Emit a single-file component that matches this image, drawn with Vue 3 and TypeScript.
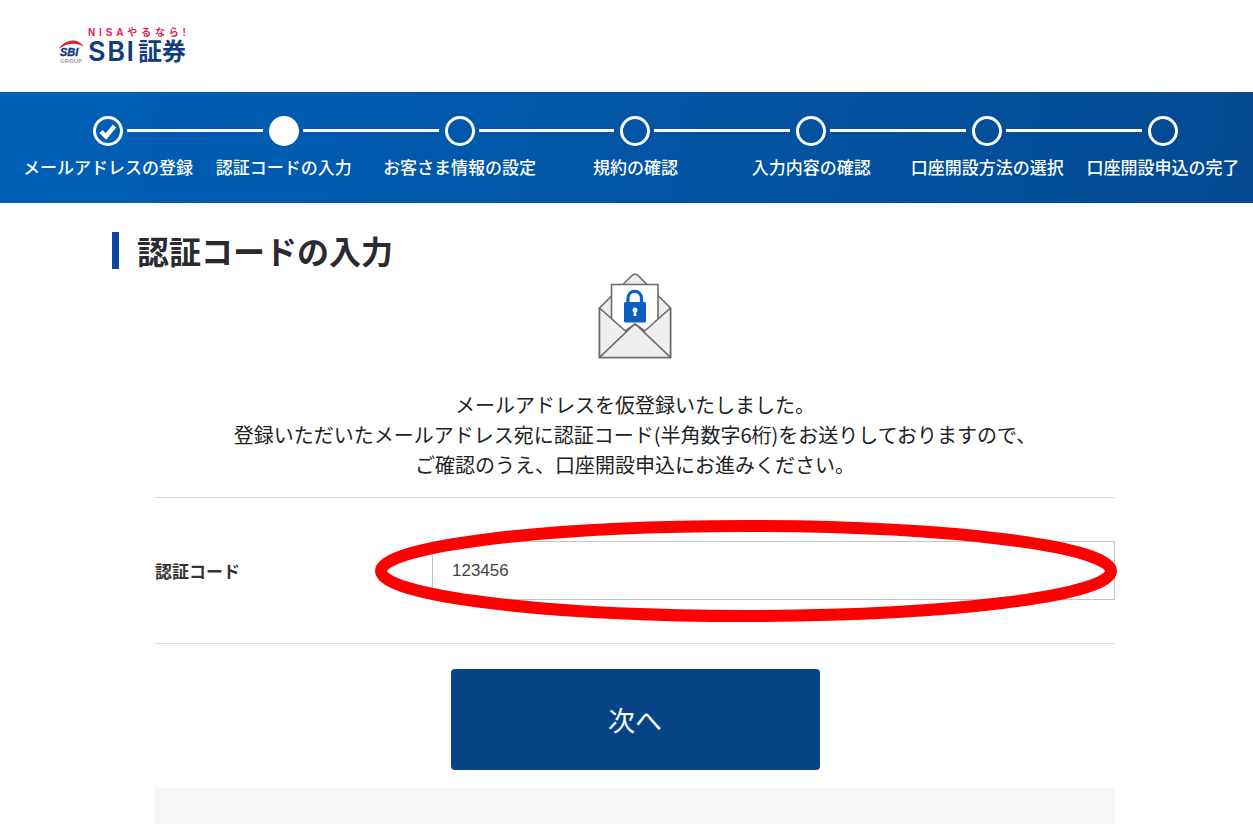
<script setup lang="ts">
import { ref } from 'vue'

type StepState = 'done' | 'current' | 'todo'

interface Step {
  label: string
  state: StepState
}

const steps: Step[] = [
  { label: 'メールアドレスの登録', state: 'done' },
  { label: '認証コードの入力', state: 'current' },
  { label: 'お客さま情報の設定', state: 'todo' },
  { label: '規約の確認', state: 'todo' },
  { label: '入力内容の確認', state: 'todo' },
  { label: '口座開設方法の選択', state: 'todo' },
  { label: '口座開設申込の完了', state: 'todo' },
]

const tagline: string[] = [...'NISAやるなら!']
const brandLetters: string[] = [...'SBI']
const code = ref<string>('123456')
</script>

<template>
  <div class="page">
    <header class="header">
      <a class="logo" href="#">
        <svg class="emblem" viewBox="0 0 26 26" width="26" height="26" aria-hidden="true">
          <path d="M1 10 C5 1.500 19 -3 26 8 C18 3 9 4 1 10Z" fill="#d9262f" />
          <text x="2" y="17" class="emblem-name">SBI</text>
          <text x="2" y="24" class="emblem-group">GROUP</text>
        </svg>
        <span class="wordmark">
          <span class="tagline"><span v-for="(c, i) in tagline" :key="i">{{ c }}</span></span>
          <span class="brand">
            <span class="brand-latin"><span v-for="c in brandLetters" :key="c">{{ c }}</span></span>
            <span class="brand-kanji">証券</span>
          </span>
        </span>
      </a>
    </header>

    <nav class="progress">
      <ol class="steps">
        <li v-for="step in steps" :key="step.label" class="step">
          <span class="marker-row">
            <span class="marker" :class="step.state">
              <svg v-if="step.state === 'done'" viewBox="0 0 30 30" width="30" height="30" aria-hidden="true">
                <path d="M8 15.500 L13 20.500 L21.500 10" fill="none" stroke="#fff" stroke-width="4.400" />
              </svg>
            </span>
            <span class="connector"></span>
          </span>
          <span class="step-label">{{ step.label }}</span>
        </li>
      </ol>
    </nav>

    <main class="main">
      <h1 class="title">認証コードの入力</h1>

      <div class="content">
        <svg class="envelope" viewBox="0 0 74 88" width="74" height="88" aria-hidden="true">
          <g stroke="#6b6b6b" stroke-width="1.600" stroke-linejoin="round">
            <path d="M1.500 36 L34 3.500 Q37 1 40 3.500 L72.500 36 V85.500 H1.500Z" fill="#ededed" />
            <path d="M13.500 12.500 H60 V49 L48 60 L37 52 L26 60 L13.500 49Z" fill="#fff" />
            <path d="M1.500 36 L28.500 60 L1.500 85.500Z M72.500 36 L45.500 60 L72.500 85.500Z" fill="#efefef" />
            <path d="M1.500 85.500 L34 54.500 Q37 51.500 40 54.500 L72.500 85.500Z" fill="#efefef" />
          </g>
          <path d="M30 31 V26.500 C30 17 43.500 17 43.500 26.500 V31" fill="none" stroke="#0a5fc0" stroke-width="3.200" />
          <rect x="26" y="30" width="22" height="20.500" rx="1.500" fill="#0a5fc0" />
          <circle cx="37" cy="38" r="2.500" fill="#fff" />
          <path d="M36 38 H38 L38.500 44 H35.500Z" fill="#fff" />
        </svg>

        <p class="message">
          メールアドレスを仮登録いたしました。<br />
          登録いただいたメールアドレス宛に認証コード(半角数字6桁)をお送りしておりますので、<br />
          ご確認のうえ、口座開設申込にお進みください。
        </p>

        <form class="form" @submit.prevent>
          <div class="field">
            <label class="field-label" for="auth-code">認証コード</label>
            <div class="field-control">
              <input id="auth-code" v-model="code" class="code-input" type="text" inputmode="numeric" />
              <svg class="highlight" aria-hidden="true">
                <ellipse class="highlight-ring" cx="50%" cy="50%" />
              </svg>
            </div>
          </div>
          <button class="next" type="submit">次へ</button>
        </form>

        <section class="panel"></section>
      </div>
    </main>
  </div>
</template>

<style>
body {
  margin: 0;
  background: #fff;
}
</style>

<style scoped>
.page {
  display: flex;
  flex-direction: column;
  height: 100vh;
  overflow: hidden;
  color: #222;
  font-family: "Noto Sans CJK JP", sans-serif;
}

.header {
  flex: none;
  box-sizing: border-box;
  height: 92px;
  padding: 27px 0 0 58px;
}

.logo {
  display: inline-flex;
  align-items: flex-end;
  gap: 4px;
  color: #123c80;
  text-decoration: none;
}

.emblem {
  display: block;
}

.emblem-name {
  font: italic bold 11px "Liberation Sans", sans-serif;
  fill: #123c80;
  stroke: #123c80;
  stroke-width: 0.4px;
}

.emblem-group {
  font: 6px "Liberation Sans", sans-serif;
  fill: #777;
}

.wordmark {
  display: flex;
  flex-direction: column;
  width: 98px;
}

.tagline {
  display: flex;
  justify-content: space-between;
  color: #d8284c;
  font-family: "Liberation Sans", "Noto Sans CJK JP", sans-serif;
  font-size: 10px;
  font-weight: 700;
  line-height: 11px;
}

.brand {
  display: flex;
  align-items: center;
  justify-content: space-between;
  height: 27px;
}

.brand-latin {
  display: flex;
  justify-content: space-between;
  width: 46px;
  font: 600 27px/27px Inter, sans-serif;
}

.brand-kanji {
  font-family: "Liberation Sans", "Noto Sans CJK JP", sans-serif;
  font-size: 24px;
  font-weight: 700;
  line-height: 27px;
}

.progress {
  flex: none;
  box-sizing: border-box;
  height: 111px;
  padding: 24px 2px 0 20px;
  background: linear-gradient(100deg, #0060b8, #034a92);
  color: #fff;
}

.steps {
  display: grid;
  grid-template-columns: repeat(7, 1fr);
  margin: 0;
  padding: 0;
  list-style: none;
}

.step {
  display: flex;
  flex-direction: column;
  align-items: center;
  gap: 8px;
}

.marker-row {
  display: flex;
  align-items: center;
  align-self: stretch;
  gap: 4px;
  margin-left: calc(50% - 15px);
  margin-right: calc(21px - 50%);
}

.step:last-child .connector {
  visibility: hidden;
}

.marker {
  flex: none;
  box-sizing: border-box;
  width: 30px;
  height: 30px;
  border: 3px solid #fff;
  border-radius: 50%;
}

.marker svg {
  display: block;
  margin: -3px;
}

.marker.current {
  background: #fff;
}

.connector {
  flex: 1;
  height: 3px;
  margin-bottom: 2px;
  background: #fff;
}

.step-label {
  font-size: 17px;
  font-weight: 500;
  line-height: 26px;
  white-space: nowrap;
}

.main {
  display: flex;
  flex: 1;
  flex-direction: column;
  box-sizing: border-box;
  width: 100%;
  max-width: 1063px;
  min-height: 0;
  margin: 0 auto;
  padding: 29px 0 0 17px;
}

.title {
  margin: 0;
  padding-left: 18px;
  border-left: 7px solid #0a46a0;
  color: #2a2a30;
  font-size: 32px;
  font-weight: 700;
  line-height: 37px;
}

.content {
  display: flex;
  flex: 1;
  flex-direction: column;
  align-items: center;
  width: 100%;
  max-width: 960px;
  min-height: 0;
  margin: 0 auto;
  padding-top: 3px;
}

.envelope {
  display: block;
  flex: none;
}

.message {
  margin: 30px 0 17px;
  font-size: 20px;
  line-height: 30px;
  text-align: center;
  white-space: nowrap;
}

.form {
  display: flex;
  flex-direction: column;
  align-items: center;
  gap: 25px;
  width: 100%;
}

.field {
  display: flex;
  align-items: center;
  justify-content: space-between;
  box-sizing: border-box;
  width: 100%;
  padding: 43px 0;
  border: solid #dcdce4;
  border-width: 1px 0;
}

.field-label {
  color: #333;
  font-size: 17px;
  font-weight: 700;
}

.field-control {
  position: relative;
  flex: 0 0 683px;
}

.code-input {
  display: block;
  box-sizing: border-box;
  width: 100%;
  height: 59px;
  padding: 0 19px;
  border: 1px solid #c4c4c4;
  border-radius: 0;
  outline: none;
  background: #fff;
  color: #444;
  font: 17px "Liberation Sans", sans-serif;
}

.highlight {
  position: absolute;
  top: -21px;
  left: -57px;
  width: calc(100% + 59px);
  height: 102px;
  pointer-events: none;
}

.highlight-ring {
  rx: calc(50% - 6px);
  ry: calc(50% - 6px);
  fill: none;
  stroke: #f00;
  stroke-width: 12px;
}

.next {
  width: 369px;
  height: 101px;
  padding: 0;
  border: 0;
  border-radius: 4px;
  background: #064485;
  color: #fff;
  font: 27px "Noto Sans CJK JP", sans-serif;
  cursor: pointer;
}

.panel {
  flex: 1;
  width: 100%;
  margin-top: 18px;
  background: #f6f6f6;
}
</style>
